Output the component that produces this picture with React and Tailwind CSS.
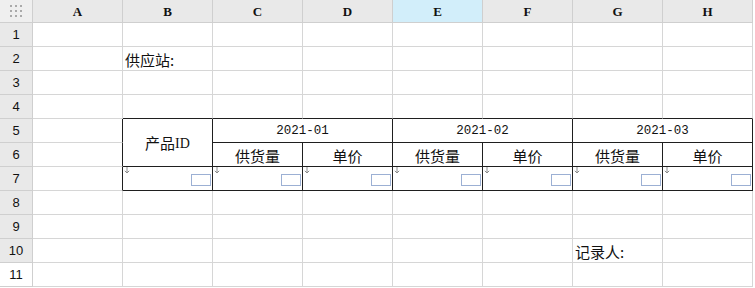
import React from "react";

const CJK = { fontFamily: '"Noto Sans CJK SC", "Noto Sans", sans-serif' };
const COLS = ["A", "B", "C", "D", "E", "F", "G", "H"];

function Arrow() {
  return (
    <svg className="absolute left-[1px] top-[0px]" width="6" height="7" viewBox="0 0 6 7">
      <path d="M3 0 V6 M0.8 3.8 L3 6 L5.2 3.8" stroke="#8a8a8a" strokeWidth="1" fill="none" />
    </svg>
  );
}

function InputCell() {
  return (
    <div className="relative border-r border-b border-r-[#1f1f1f] border-b-[#1f1f1f] bg-white">
      <Arrow />
      <div className="absolute right-[1px] bottom-[4px] w-[20px] h-[12px] border border-[#9cb0d4] bg-white" />
    </div>
  );
}

function Cell({ children, className = "" }) {
  return (
    <div
      className={`border-r border-b border-[#d6d6d6] bg-white text-[15px] leading-none text-[#111] flex items-end pb-[3px] pl-[2px] whitespace-nowrap ${className}`}
      style={CJK}
    >
      {children}
    </div>
  );
}

function RowHead({ n, white }) {
  return (
    <div
      className={`border-r border-b border-[#cfcfcf] ${white ? "bg-white" : "bg-[#e9e9e9]"} flex items-center justify-center text-[13px] text-[#111]`}
      style={{ fontFamily: '"Liberation Sans", Arial, sans-serif' }}
    >
      {n}
    </div>
  );
}

export default function App() {
  const cells = [];
  cells.push(
    <div key="corner" className="border-r border-b border-[#cfcfcf] bg-[#efefef] flex items-center justify-center">
      <svg width="12" height="12" viewBox="0 0 12 12">
        {[0, 5, 10].map((y) =>
          [0, 5, 10].map((x) => <rect key={`${x}-${y}`} x={x} y={y} width="2" height="2" fill="#aaaaaa" />)
        )}
      </svg>
    </div>
  );
  COLS.forEach((c) => {
    cells.push(
      <div
        key={`h${c}`}
        className={`border-r border-b border-[#cfcfcf] ${c === "E" ? "bg-[#d2eefa]" : "bg-[#e9e9e9]"} flex items-center justify-center text-[13px] font-semibold text-[#111] pt-[1px]`}
        style={{ fontFamily: '"Liberation Serif", "Times New Roman", serif' }}
      >
        {c}
      </div>
    );
  });

  for (let r = 1; r <= 11; r++) {
    cells.push(<RowHead key={`r${r}`} n={r} white={r === 11} />);
    if (r === 5) {
      cells.push(<Cell key="a5" className="border-r-[#1f1f1f]" />);
      cells.push(
        <div
          key="b5"
          className="row-span-2 border-r border-b border-[#1f1f1f] bg-white flex items-center justify-center text-[15px] text-[#111] pt-[1px]"
          style={CJK}
        >
          产品<span style={{ fontFamily: '"Liberation Serif", serif' }} className="text-[14px]">ID</span>
        </div>
      );
      ["2021-01", "2021-02", "2021-03"].forEach((t) => {
        cells.push(
          <div
            key={t}
            className="col-span-2 border-r border-b border-[#1f1f1f] bg-white flex items-center justify-center text-[12.5px] text-[#111] pt-[2px]"
            style={{ fontFamily: '"Liberation Mono", "Courier New", monospace' }}
          >
            {t}
          </div>
        );
      });
      continue;
    }
    if (r === 6) {
      cells.push(<Cell key="a6" className="border-r-[#1f1f1f]" />);
      for (let i = 0; i < 3; i++) {
        ["供货量", "单价"].forEach((t) => {
          cells.push(
            <div
              key={`${t}${i}`}
              className="border-r border-b border-[#1f1f1f] bg-white flex items-center justify-center text-[15px] leading-none text-[#111] pt-[2px]"
              style={CJK}
            >
              {t}
            </div>
          );
        });
      }
      continue;
    }
    if (r === 7) {
      cells.push(<Cell key="a7" className="border-r-[#1f1f1f]" />);
      for (let i = 0; i < 7; i++) cells.push(<InputCell key={`in${i}`} />);
      continue;
    }
    COLS.forEach((c, ci) => {
      let content = null;
      if (r === 2 && c === "B") content = "供应站:";
      if (r === 10 && c === "G") content = "记录人:";
      const dark = r === 4 && ci >= 1 ? "border-b-[#1f1f1f]" : "";
      cells.push(
        <Cell key={`${c}${r}`} className={dark}>
          {content}
        </Cell>
      );
    });
  }

  return (
    <div className="w-[755px] h-[288px] overflow-hidden bg-white">
      <div className="grid grid-cols-[33px_repeat(8,90px)] grid-rows-[23px_repeat(11,24px)]">
        {cells}
      </div>
    </div>
  );
}
